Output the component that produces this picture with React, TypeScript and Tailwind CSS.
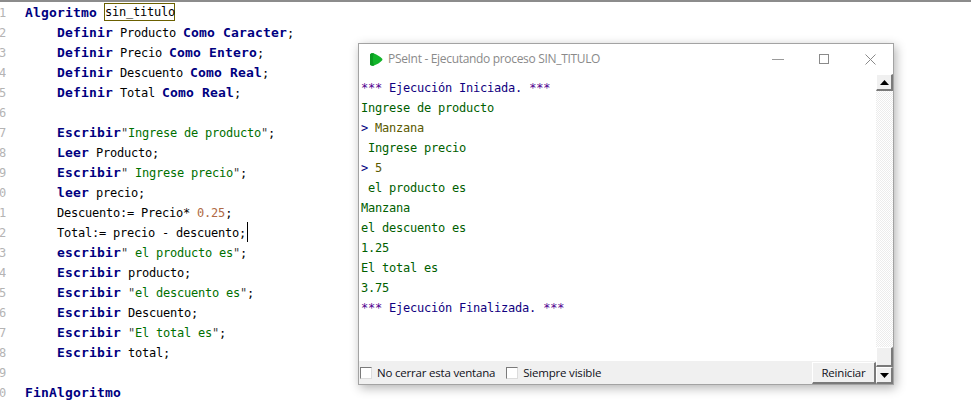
type Tok = [string, string]

const tk: Record<string, string> = {
  k: 'font-bold text-[13px] tracking-[0.17px] text-[#000080]',
  t: 'text-[#000000]',
  s: 'text-[#007000]',
  q: 'text-[#404040]',
  n: 'text-[#b06a45]',
}

// [indent, tokens]
const lines: [boolean, Tok[]][] = [
  [false, [['k', 'Algoritmo'], ['t', ' '], ['box', 'sin_titulo']]],
  [true, [['k', 'Definir'], ['t', ' Producto '], ['k', 'Como Caracter'], ['t', ';']]],
  [true, [['k', 'Definir'], ['t', ' Precio '], ['k', 'Como Entero'], ['t', ';']]],
  [true, [['k', 'Definir'], ['t', ' Descuento '], ['k', 'Como Real'], ['t', ';']]],
  [true, [['k', 'Definir'], ['t', ' Total '], ['k', 'Como Real'], ['t', ';']]],
  [true, []],
  [true, [['k', 'Escribir'], ['q', '"'], ['s', 'Ingrese de producto'], ['q', '"'], ['t', ';']]],
  [true, [['k', 'Leer'], ['t', ' Producto;']]],
  [true, [['k', 'Escribir'], ['q', '" '], ['s', 'Ingrese precio'], ['q', '"'], ['t', ';']]],
  [true, [['k', 'leer'], ['t', ' precio;']]],
  [true, [['t', 'Descuento:= Precio* '], ['n', '0.25'], ['t', ';']]],
  [true, [['t', 'Total:= precio - descuento;'], ['caret', '']]],
  [true, [['k', 'escribir'], ['q', '" '], ['s', 'el producto es'], ['q', '"'], ['t', ';']]],
  [true, [['k', 'Escribir'], ['t', ' producto;']]],
  [true, [['k', 'Escribir'], ['q', ' "'], ['s', 'el descuento es'], ['q', '"'], ['t', ';']]],
  [true, [['k', 'Escribir'], ['t', ' Descuento;']]],
  [true, [['k', 'Escribir'], ['q', ' "'], ['s', 'El total es'], ['q', '"'], ['t', ';']]],
  [true, [['k', 'Escribir'], ['t', ' total;']]],
  [true, []],
  [false, [['k', 'FinAlgoritmo']]],
]

const green = 'text-[#006000]'

function Banner({ text }: { text: string }) {
  return (
    <>
      <span className="text-[#500090]">***</span>
      <span className="text-[#100080]"> {text} </span>
      <span className="text-[#500090]">***</span>
    </>
  )
}

function Input({ text }: { text: string }) {
  return (
    <>
      <span className="text-[#000080]">&gt;</span>
      <span className="text-[#5a5a00]"> {text}</span>
    </>
  )
}

function Token({ tok }: { tok: Tok }) {
  const [type, text] = tok
  if (type === 'box') {
    return <span className="inline-block w-[71px] h-[18px] leading-[16px] align-top border border-[#6b6000] text-black">{text}</span>
  }
  if (type === 'caret') {
    return <span className="inline-block w-px h-[20px] ml-px -translate-y-px bg-black align-top" />
  }
  return <span className={tk[type]}>{text}</span>
}

function Check({ label }: { label: string }) {
  return (
    <label className="flex items-center gap-[5px]">
      <span className="w-[12px] h-[12px] bg-white border border-t-[#7a7a7a] border-l-[#7a7a7a] border-b-[#dcdcdc] border-r-[#dcdcdc]" />
      <span className="text-[11.5px] tracking-[-0.2px] text-[#101020]">{label}</span>
    </label>
  )
}

function ScrollBtn({ up }: { up?: boolean }) {
  return (
    <div className="h-[17px] bg-[#f0f0f0] border-r-2 border-b-2 border-[#7a7a7a] border-t border-l border-t-white border-l-white flex items-center justify-center">
      <svg width="9" height="5" viewBox="0 0 9 5">
        <path d={up ? 'M4.500 0L9 5H0z' : 'M0 0h9L4.500 5z'} fill="#000" />
      </svg>
    </div>
  )
}

export default function App() {
  return (
    <div className="relative w-[971px] h-[405px] overflow-hidden bg-white border-t-2 border-[#8c8c8c] font-['DejaVu_Sans_Mono',monospace] text-[12px] tracking-[-0.22px]">
      <div className="pt-px">
        {lines.map(([indent, toks], i) => (
          <div key={i} className="flex h-[20px] leading-[20px] whitespace-pre">
            <div className="w-[6px] shrink-0 overflow-hidden flex justify-end text-[#b4b4b4]">
              <span>{i + 1}</span>
            </div>
            <div className={indent ? 'pl-[51px]' : 'pl-[19px]'}>
              {toks.map((t, j) => <Token key={j} tok={t} />)}
            </div>
          </div>
        ))}
      </div>

      <div className="absolute left-[358px] top-[41px] w-[536px] h-[342px] bg-white border border-[#a3a3a3] shadow-[2px_3px_10px_rgba(0,0,0,0.3)] flex flex-col">
        <div className="h-[30px] shrink-0 flex items-center pl-[10px] font-['Open_Sans',sans-serif] tracking-normal">
          <svg width="14" height="13" viewBox="0 0 14 13">
            <path d="M1 2C1 .5 3 0 5 .5 8 1.500 11 3.500 13 5.500c.6.5.6 1.500 0 2-2 2-5 4-8 5-2 .5-4 0-4-1.500z" fill="#12b52a" />
            <path d="M1 2C1 .5 3 0 5 .5 3.500 3 3.500 9 5 12.500c-2 .5-4 0-4-1.500z" fill="#0b9a22" />
          </svg>
          <span className="ml-[5px] text-[12px] tracking-[-0.32px] text-[#8a8a8a]">PSeInt - Ejecutando proceso SIN_TITULO</span>
          <div className="ml-auto flex items-center">
            <div className="w-[12px] h-px bg-[#9a9a9a] mr-[35px]" />
            <div className="w-[10px] h-[10px] border border-[#8a8a8a] mr-[36px]" />
            <svg width="11" height="11" viewBox="0 0 11 11" className="mr-[17px]">
              <path d="M.5.5l10 10M10.500.5l-10 10" stroke="#8a8a8a" fill="none" />
            </svg>
          </div>
        </div>

        <div className="flex-1 flex min-h-0">
          <div className="flex-1 flex flex-col min-w-0">
            <div className="flex-1 pl-[2px] pt-[4px] [&>div]:h-[20px] [&>div]:leading-[20px] [&>div]:whitespace-pre">
              <div><Banner text="Ejecución Iniciada." /></div>
              <div className={green}>Ingrese de producto</div>
              <div><Input text="Manzana" /></div>
              <div className={green}> Ingrese precio</div>
              <div><Input text="5" /></div>
              <div className={green}> el producto es</div>
              <div className={green}>Manzana</div>
              <div className={green}>el descuento es</div>
              <div className={green}>1.25</div>
              <div className={green}>El total es</div>
              <div className={green}>3.75</div>
              <div><Banner text="Ejecución Finalizada." /></div>
            </div>
            <div className="h-[23px] shrink-0 bg-[#f0f0f0] flex items-center font-['Open_Sans',sans-serif] tracking-normal">
              <div className="flex items-center gap-[11px] pl-[1px]">
                <Check label="No cerrar esta ventana" />
                <Check label="Siempre visible" />
              </div>
              <button className="ml-auto w-[64px] h-[22px] self-end bg-[#f0f0f0] border-t border-l border-white border-b-2 border-r-2 border-b-[#7a7a7a] border-r-[#7a7a7a] text-[11.5px] tracking-[-0.2px] text-[#101020]">
                Reiniciar
              </button>
            </div>
          </div>
          <div className="w-[17px] shrink-0 flex flex-col">
            <ScrollBtn up />
            <div className="flex-1 bg-[repeating-conic-gradient(#ececec_0_25%,#ffffff_0_50%)] bg-[length:2px_2px]" />
            <div className="h-[20px] bg-[#f0f0f0] border-r-2 border-b-2 border-[#7a7a7a] border-t border-l border-t-white border-l-white" />
            <ScrollBtn />
          </div>
        </div>
      </div>
    </div>
  )
}
